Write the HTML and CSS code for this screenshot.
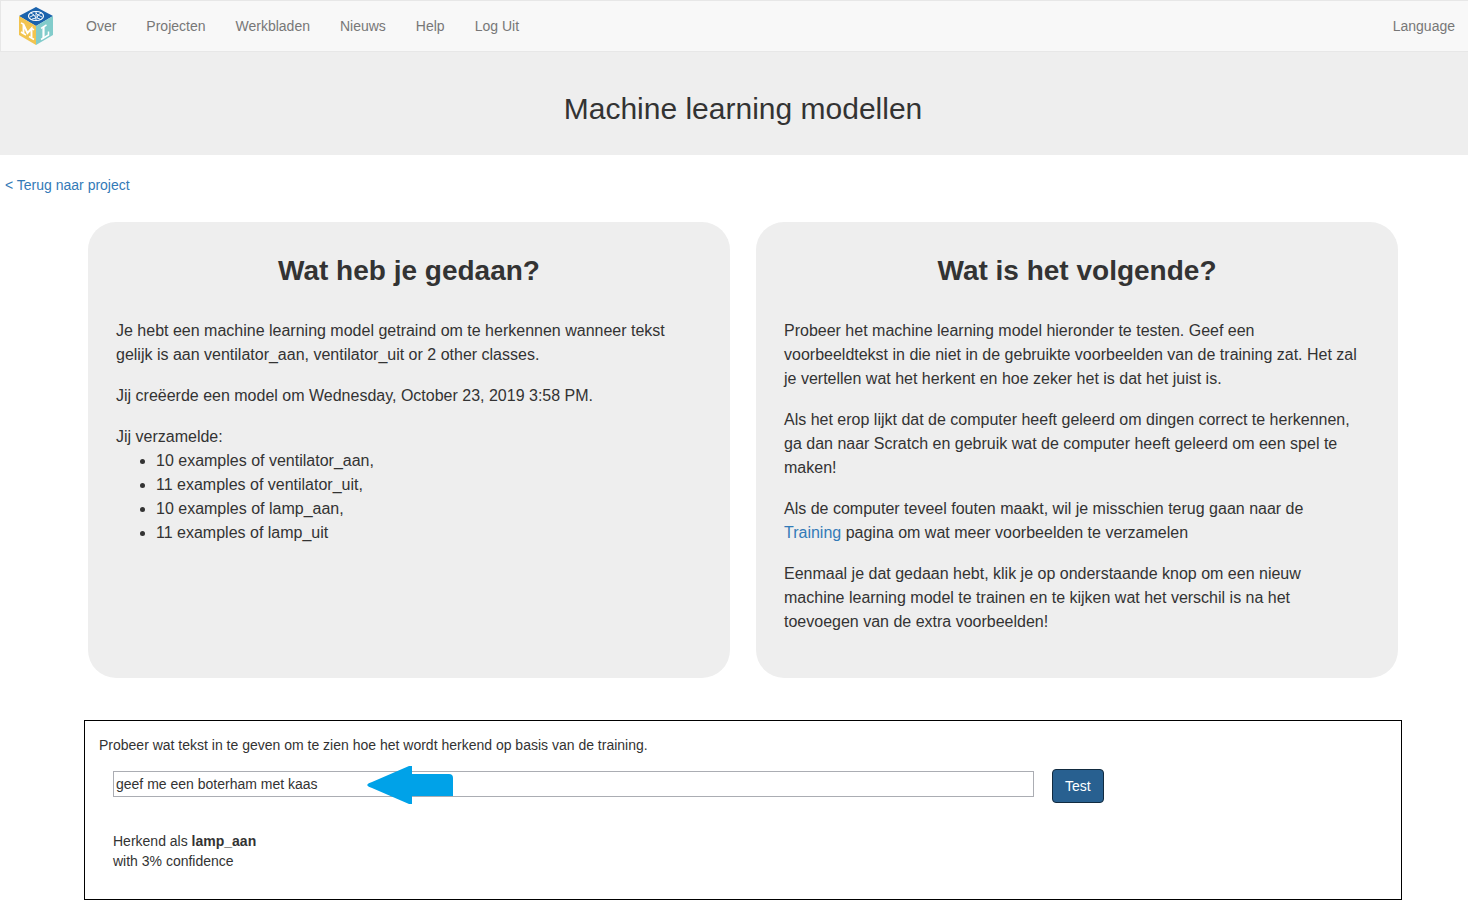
FILE: index.html
```html
<!DOCTYPE html>
<html lang="nl">
<head>
<meta charset="utf-8">
<title>Machine learning modellen</title>
<link rel="stylesheet" href="styles.css">
</head>
<body>
<nav class="navbar">
  <a class="brand" href="#" aria-label="Home">
    <svg class="logo" viewBox="0 0 36 40" width="36" height="40" aria-hidden="true">
      <path fill="#1b63ad" d="M18 1 35 10 18 20 1 10Z"/>
      <path fill="#f2c44f" d="M1 10 18 20V39L1 29Z"/>
      <path fill="#82cccb" d="M35 10 18 20V39L35 29Z"/>
      <g fill="none" stroke="#fff">
        <ellipse cx="18" cy="10" rx="7.5" ry="4.5" stroke-width="1.2"/>
        <path stroke-width=".9" d="M18 5.500V14.500M13 7 16 9 12 11M16 9 18 12 14 13M23 7 20 9 24 11M20 9 18 7M20 9 19 12 22 13"/>
      </g>
      <g fill="none" stroke="#fff">
        <path stroke-width="1.900" d="M5.500 18.500V27.500M5.500 18.500 9.500 27 13.500 22.500V31.500"/>
        <path stroke-width="1.500" d="M3 16.800 6 18.500M3 26 8 29M13 22 16 23.800M11 30.500 16 33.500"/>
        <path stroke-width="2.200" d="M25.500 21V32"/>
        <path stroke-width="1.500" d="M23 22.300 28.500 19M23 33.500 30.500 29V25.500"/>
      </g>
    </svg>
  </a>
  <a class="nav-link" href="#">Over</a>
  <a class="nav-link" href="#">Projecten</a>
  <a class="nav-link" href="#">Werkbladen</a>
  <a class="nav-link" href="#">Nieuws</a>
  <a class="nav-link" href="#">Help</a>
  <a class="nav-link" href="#">Log Uit</a>
  <a class="nav-link language" href="#">Language</a>
</nav>
<header class="banner"><h1>Machine learning modellen</h1></header>
<div class="back"><a href="#">&lt; Terug naar project</a></div>
<main class="content">
  <div class="cards">
    <section class="card">
      <h2>Wat heb je gedaan?</h2>
      <p>Je hebt een machine learning model getraind om te herkennen wanneer tekst gelijk is aan ventilator_aan, ventilator_uit or 2 other classes.</p>
      <p>Jij creëerde een model om Wednesday, October 23, 2019 3:58 PM.</p>
      <div>Jij verzamelde:</div>
      <ul>
        <li>10 examples of ventilator_aan,</li>
        <li>11 examples of ventilator_uit,</li>
        <li>10 examples of lamp_aan,</li>
        <li>11 examples of lamp_uit</li>
      </ul>
    </section>
    <section class="card">
      <h2>Wat is het volgende?</h2>
      <p>Probeer het machine learning model hieronder te testen. Geef een<br>voorbeeldtekst in die niet in de gebruikte voorbeelden van de training zat. Het zal<br>je vertellen wat het herkent en hoe zeker het is dat het juist is.</p>
      <p>Als het erop lijkt dat de computer heeft geleerd om dingen correct te herkennen, ga dan naar Scratch en gebruik wat de computer heeft geleerd om een spel te maken!</p>
      <p>Als de computer teveel fouten maakt, wil je misschien terug gaan naar de<br><a href="#">Training</a> pagina om wat meer voorbeelden te verzamelen</p>
      <p>Eenmaal je dat gedaan hebt, klik je op onderstaande knop om een nieuw<br>machine learning model te trainen en te kijken wat het verschil is na het<br>toevoegen van de extra voorbeelden!</p>
    </section>
  </div>
  <section class="tester">
    <label for="test-text">Probeer wat tekst in te geven om te zien hoe het wordt herkend op basis van de training.</label>
    <form class="test-form">
      <div class="field">
        <input id="test-text" type="text" value="geef me een boterham met kaas">
        <svg class="arrow" viewBox="0 0 86 40" width="86" height="40" aria-hidden="true">
          <path fill="#00a2e8" d="M0 20 Q1 18 5 17L42 1H45V9H82Q86 9 86 13V31H45V39H42L5 23Q1 22 0 20Z"/>
        </svg>
      </div>
      <button type="button">Test</button>
    </form>
    <div class="result">Herkend als <strong>lamp_aan</strong><br>with 3% confidence</div>
  </section>
</main>
</body>
</html>
```
FILE: styles.css
```css
* { box-sizing: border-box; }
body {
  margin: 0;
  background: #fff;
  color: #333;
  font: 14px/20px "Liberation Sans", Arial, sans-serif;
}
a { color: #337ab7; text-decoration: none; }
.navbar {
  display: flex;
  align-items: center;
  height: 52px;
  padding-left: 17px;
  background: #f8f8f8;
  border: 1px solid #e7e7e7;
  border-right: 0;
}
.brand { display: flex; margin-right: 17px; }
.nav-link { padding: 15px; color: #777; }
.language { margin-left: auto; padding-right: 13px; }
.banner {
  padding: 40px 0 30px 18px;
  background: #eee;
  text-align: center;
}
h1 { margin: 0; font-size: 30px; line-height: 33px; font-weight: 400; }
.back { padding: 20px 5px; }
.content { padding: 7px 66px 11px 84px; }
.cards {
  display: grid;
  grid-template-columns: 1fr 1fr;
  gap: 26px;
  padding: 0 4px;
}
.card {
  padding: 29px 28px 27px;
  border-radius: 28px;
  background: #eee;
  font-size: 16px;
  line-height: 24px;
}
h2 {
  margin: 0 0 28px;
  font-size: 28px;
  line-height: 40px;
  text-align: center;
}
.card p { margin: 0 0 17px; }
.card ul { margin: 0; padding-left: 40px; }
.tester {
  margin-top: 42px;
  padding: 14px 14px 28px;
  border: 1px solid #000;
}
.tester label { display: block; }
.test-form {
  display: flex;
  align-items: flex-start;
  gap: 18px;
  margin: 14px 0 28px 14px;
}
.field { position: relative; flex: 0 1 921px; margin-top: 2px; }
.field input {
  display: block;
  width: 100%;
  height: 26px;
  padding: 1px 2px;
  border: 1px solid #abadb3;
  background: #fff;
  color: #333;
  font: inherit;
}
.arrow { position: absolute; left: 254px; top: -6px; }
button {
  height: 34px;
  padding: 6px 12px;
  border: 1px solid #122b40;
  border-radius: 4px;
  background: #286090;
  color: #fff;
  font: inherit;
}
.result { margin-left: 14px; }
```
